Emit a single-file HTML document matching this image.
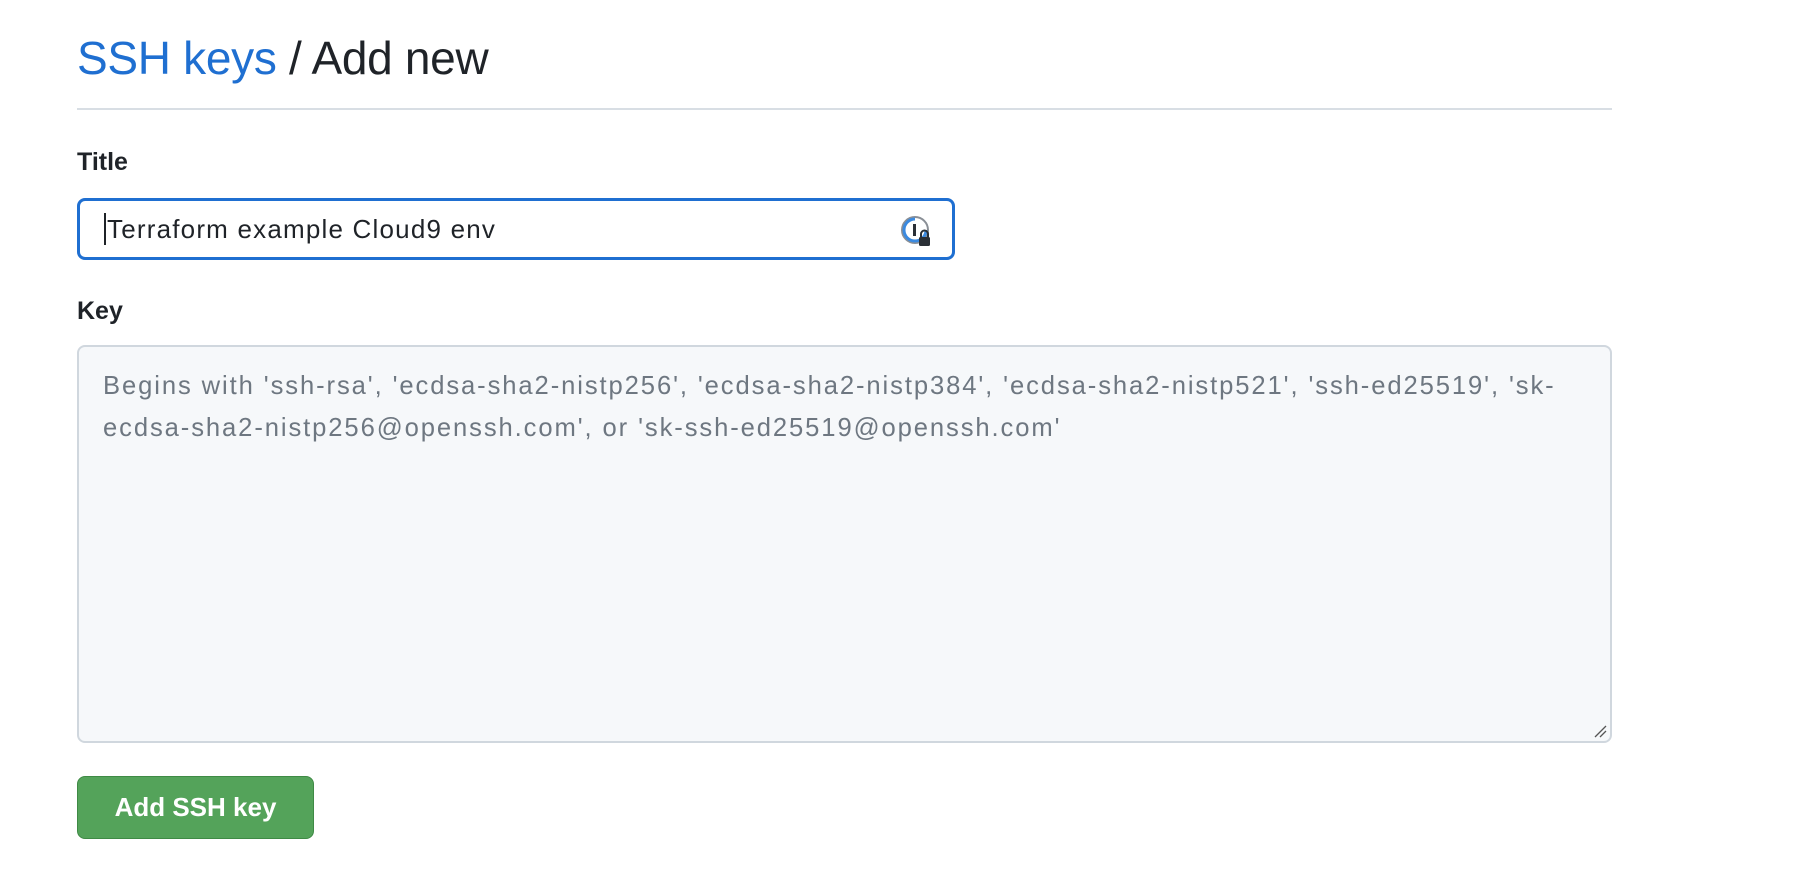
<!DOCTYPE html>
<html><head><meta charset="utf-8"><style>
html,body{margin:0;background:#fff;width:1814px;height:896px;overflow:hidden;font-family:"Liberation Sans",Helvetica,Arial,sans-serif;color:#1f2328}
h1{position:absolute;left:77px;top:26px;margin:0;font-size:46px;font-weight:400;line-height:64px;letter-spacing:-0.3px}
h1 a{color:#1f6fd1;text-decoration:none}
.hr{position:absolute;left:77px;top:108px;width:1535px;height:2px;background:#d8dee4}
.lbl{position:absolute;left:77px;font-size:25px;font-weight:700;color:#1f2328}
.inp{position:absolute;left:77px;top:198px;width:872px;height:56px;border:3px solid #1f6fd1;border-radius:8px;box-sizing:content-box}
.inp span{position:absolute;left:24px;top:12px;font-size:26px;color:#1f2328;border-left:2px solid #1f2328;padding-left:1px;line-height:32px;letter-spacing:1.2px}
.ta{position:absolute;left:77px;top:345px;width:1535px;height:398px;border:2px solid #d0d7de;border-radius:8px;background:#f6f8fa;box-sizing:border-box}
.ta div{position:absolute;left:24px;top:18px;right:36px;font-size:25.6px;line-height:42px;color:#6e7781;letter-spacing:1.9px}
.btn{position:absolute;left:77px;top:776px;width:237px;height:63px;background:#54a35a;border:1px solid #3f8a45;border-radius:8px;box-sizing:border-box;color:#fff;font-weight:700;font-size:26px;text-align:center;line-height:61px}
</style></head><body>
<h1><a>SSH keys</a> / Add new</h1>
<div class="hr"></div>
<div class="lbl" style="top:148px">Title</div>
<div class="inp"><span>Terraform example Cloud9 env</span>
<svg style="position:absolute;right:18px;top:14px" width="34" height="34" viewBox="0 0 34 34"><circle cx="15" cy="15" r="13" fill="#fff" stroke="#8a8f96" stroke-width="2"/><path d="M15 4 A11 11 0 1 0 26 15" fill="none" stroke="#3b8ae0" stroke-width="3"/><rect x="13" y="9" width="3" height="12" fill="#2a2f36"/><rect x="19" y="22" width="11" height="9" rx="1.5" fill="#2a2f36"/><path d="M21 22v-3a3.5 3.5 0 0 1 7 0v3" fill="none" stroke="#2a2f36" stroke-width="2"/></svg></div>
<div class="lbl" style="top:297px">Key</div>
<div class="ta"><div>Begins with 'ssh-rsa', 'ecdsa-sha2-nistp256', 'ecdsa-sha2-nistp384', 'ecdsa-sha2-nistp521', 'ssh-ed25519', 'sk-ecdsa-sha2-nistp256@openssh.com', or 'sk-ssh-ed25519@openssh.com'</div>
<svg style="position:absolute;right:3px;bottom:3px" width="14" height="14"><path d="M2 13L13 2M7 13L13 7" stroke="#555" stroke-width="1.3"/></svg></div>
<div class="btn">Add SSH key</div>
</body></html>
